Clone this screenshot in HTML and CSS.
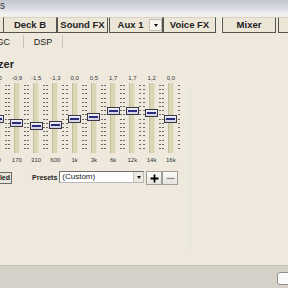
FILE: index.html
```html
<!DOCTYPE html>
<html>
<head>
<meta charset="utf-8">
<link rel="stylesheet" href="styles.css">
</head>
<body>
<div class="app">
  <div class="titlebar"><div class="clip title-clip"><span>Options</span></div></div>
  <div class="tabs">
    <div class="tab tab-partial"></div>
    <div class="tab w54">Deck B</div>
    <div class="tab w51">Sound FX</div>
    <div class="tab w54 tab-aux"><span class="aux-label">Aux 1</span><span class="drop"><span class="tri"></span></span></div>
    <div class="tab w53">Voice FX</div>
    <div class="tab-gap"></div>
    <div class="tab w54">Mixer</div>
    <div class="tab tab-next"></div>
  </div>
  <div class="subtabs">
    <div class="subtab sub-clip"><span>AGC</span></div>
    <div class="subtab sub-dsp">DSP</div>
  </div>
  <div class="main">
    <div class="left">
      <div class="heading clip"><span>Equalizer</span></div>
      <div class="eq">
        <div class="band"><div class="val">0,0</div><div class="slider"><div class="ticks"></div><div class="track"></div><div class="ticks"></div><div class="knob" style="top:32px"></div></div><div class="freq">60</div></div>
        <div class="band"><div class="val">-0,9</div><div class="slider"><div class="ticks"></div><div class="track"></div><div class="ticks"></div><div class="knob" style="top:36px"></div></div><div class="freq">170</div></div>
        <div class="band"><div class="val">-1,5</div><div class="slider"><div class="ticks"></div><div class="track"></div><div class="ticks"></div><div class="knob" style="top:39px"></div></div><div class="freq">310</div></div>
        <div class="band"><div class="val">-1,3</div><div class="slider"><div class="ticks"></div><div class="track"></div><div class="ticks"></div><div class="knob" style="top:38px"></div></div><div class="freq">600</div></div>
        <div class="band"><div class="val">0,0</div><div class="slider"><div class="ticks"></div><div class="track"></div><div class="ticks"></div><div class="knob" style="top:32px"></div></div><div class="freq">1k</div></div>
        <div class="band"><div class="val">0,5</div><div class="slider"><div class="ticks"></div><div class="track"></div><div class="ticks"></div><div class="knob" style="top:30px"></div></div><div class="freq">3k</div></div>
        <div class="band"><div class="val">1,7</div><div class="slider"><div class="ticks"></div><div class="track"></div><div class="ticks"></div><div class="knob" style="top:24px"></div></div><div class="freq">6k</div></div>
        <div class="band"><div class="val">1,7</div><div class="slider"><div class="ticks"></div><div class="track"></div><div class="ticks"></div><div class="knob" style="top:24px"></div></div><div class="freq">12k</div></div>
        <div class="band"><div class="val">1,2</div><div class="slider"><div class="ticks"></div><div class="track"></div><div class="ticks"></div><div class="knob" style="top:26px"></div></div><div class="freq">14k</div></div>
        <div class="band"><div class="val">0,0</div><div class="slider"><div class="ticks"></div><div class="track"></div><div class="ticks"></div><div class="knob" style="top:32px"></div></div><div class="freq">16k</div></div>
      </div>
      <div class="controls">
        <div class="clip enabled-clip"><span class="enabled-btn">Enabled</span></div>
        <span class="presets-label">Presets</span>
        <div class="combo"><span class="combo-text">(Custom)</span><span class="combo-btn"><span class="tri"></span></span></div>
        <div class="pm"><svg width="9" height="9" viewBox="0 0 9 9"><path d="M4.5 0.5V8.5M0.5 4.5H8.5" stroke="#000" stroke-width="1.8" fill="none"/></svg></div>
        <div class="pm"><svg width="9" height="9" viewBox="0 0 9 9"><path d="M0.5 4.5H8.5" stroke="#8a8a8a" stroke-width="1.3" fill="none"/></svg></div>
      </div>
    </div>
    <div class="groupedge"></div>
  </div>
  <div class="status"><div class="status-btn"></div></div>
</div>
</body>
</html>
```
FILE: styles.css
```css
* { box-sizing: border-box; margin: 0; padding: 0; }
html, body { width: 288px; height: 288px; overflow: hidden; }
body {
  background: #efe9dd;
  font-family: "Liberation Sans", Arial, sans-serif;
  color: #222;
}
.app { display: flex; flex-direction: column; height: 288px; }

.clip { display: flex; justify-content: flex-end; overflow: hidden; white-space: nowrap; flex: none; }

.titlebar {
  height: 17px;
  background: linear-gradient(#c2c7cf 0, #d8dbe1 8px, #eceeef 13px, #f4f3ef 16px, #efe9dd 17px);
  font-size: 10px;
  line-height: 12px;
  color: #333;
}
.title-clip { width: 5px; }

.tabs { display: flex; height: 16px; }
.tab {
  flex: none;
  height: 16px;
  border: 1px solid #55554d;
  border-top-color: #d6d4ca;
  background: #ece6d6;
  font-weight: bold;
  font-size: 9.5px;
  line-height: 14px;
  text-align: center;
  white-space: nowrap;
  overflow: hidden;
}
.tab-partial { width: 3px; border: 0; border-bottom: 1px solid #55554d; }
.w54 { width: 54px; }
.w53 { width: 53px; }
.w51 { width: 51px; }
.tab-aux { display: flex; margin-left: 1px; }
.aux-label { flex: 1; padding-left: 2px; }
.drop {
  flex: none;
  width: 13px;
  height: 12px;
  margin-top: 1px;
  background: #f6f4ec;
  border: 1px solid #c4c0b4;
  display: flex;
  align-items: center;
  justify-content: center;
}
.tri {
  width: 0;
  height: 0;
  border-left: 2.5px solid transparent;
  border-right: 2.5px solid transparent;
  border-top: 3px solid #111;
}
.tab-gap { flex: none; width: 6px; border-right: 1px solid #fbfaf4; }
.tab-next { width: 20px; margin-left: 2px; }

.subtabs { display: flex; height: 13px; margin-top: 2px; }
.subtab {
  flex: none;
  height: 13px;
  border-right: 1px solid #c9c5b8;
  font-size: 9px;
  line-height: 13px;
  padding-top: 1px;
  text-align: center;
  white-space: nowrap;
}
.sub-clip { width: 24px; display: flex; justify-content: flex-end; overflow: hidden; padding-right: 13px; }
.sub-dsp { width: 39px; }

.main { flex: 1; display: flex; padding-top: 10px; }
.left { width: 188px; flex: none; display: flex; flex-direction: column; }
.groupedge { width: 4px; flex: none; margin-top: 30px; height: 162px; background: #eae8da; }

.heading { width: 14px; height: 12px; font-weight: bold; font-size: 11px; line-height: 12px; }

.eq { display: flex; margin-left: -12px; margin-top: 4px; }
.band { width: 19.25px; flex: none; display: flex; flex-direction: column; align-items: center; }
.val, .freq {
  font-size: 6px;
  line-height: 8px;
  height: 8px;
  color: #333;
  white-space: nowrap;
}
.freq { margin-top: 3px; }
.slider {
  position: relative;
  width: 19px;
  height: 70px;
  margin-top: 1px;
  display: flex;
  justify-content: center;
  align-items: flex-start;
  gap: 4px;
}
.ticks {
  width: 2px;
  height: 67px;
  margin-top: 2px;
  background: repeating-linear-gradient(to bottom, #6a6a62 0, #6a6a62 1px, transparent 1px, transparent 4.2px);
}
.track {
  width: 6px;
  height: 70px;
  background: #dad5b5;
  border-left: 1px solid #c3bd99;
  border-right: 1px solid #e6e2cc;
}
.knob {
  position: absolute;
  left: calc(50% - 6.5px);
  width: 13px;
  height: 8px;
  border: 1px solid #383846;
  background: linear-gradient(#efeff7, #d0d0e2);
}
.knob::after {
  content: "";
  position: absolute;
  left: 1px;
  right: 1px;
  top: 2px;
  height: 2px;
  background: #2c2c7c;
}

.controls { display: flex; align-items: center; height: 14px; margin-top: 7px; }
.enabled-clip { width: 12px; height: 12px; }
.enabled-btn {
  border: 1px solid #6a6a6a;
  background: #e9e5d8;
  font-weight: bold;
  font-size: 7px;
  line-height: 10px;
  padding: 0 1px;
  height: 12px;
}
.presets-label { margin-left: 20px; font-weight: bold; font-size: 7px; line-height: 10px; }
.combo {
  display: flex;
  width: 85px;
  height: 12px;
  margin-left: 2px;
  align-self: flex-start;
  border: 1px solid #6e6e6e;
  border-right-color: #b8b8b8;
  border-bottom-color: #b8b8b8;
  background: #fff;
}
.combo-text { flex: 1; font-size: 8px; line-height: 10px; padding-left: 2px; white-space: nowrap; }
.combo-btn {
  width: 10px;
  height: 10px;
  background: #ece9e0;
  border-left: 1px solid #c8c5bb;
  display: flex;
  align-items: center;
  justify-content: center;
}
.pm {
  width: 16px;
  height: 14px;
  border: 1px solid #9c9c98;
  background: linear-gradient(#fbfbf8, #e6e4dc);
  display: flex;
  align-items: center;
  justify-content: center;
}
.combo + .pm { margin-left: 2px; }

.status {
  height: 23px;
  flex: none;
  border-top: 1px solid #c3bfb4;
  background: #d5d1c9;
  display: flex;
  justify-content: flex-end;
}
.status-btn {
  width: 14px;
  height: 13px;
  margin-top: 6px;
  margin-right: -3px;
  border: 1px solid #8e8e8e;
  border-radius: 3px;
  background: #fafafa;
}
```
